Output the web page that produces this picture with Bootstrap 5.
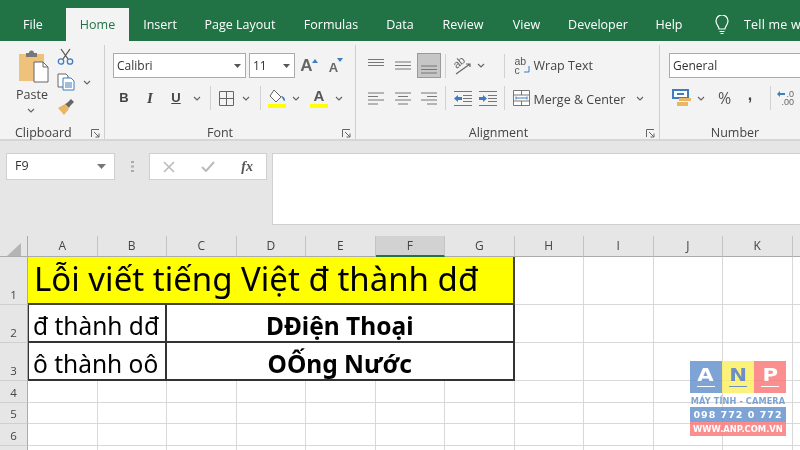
<!DOCTYPE html>
<html lang="vi">
<head>
<meta charset="utf-8">
<title>Excel</title>
<link href="https://cdn.jsdelivr.net/npm/bootstrap@5.3.0/dist/css/bootstrap.min.css" rel="stylesheet">
<style>
html,body{width:800px;height:450px;overflow:hidden;margin:0;background:#e6e6e6;font-family:"Open Sans","Noto Sans",sans-serif;color:#444}
.xl-app{width:800px;height:450px;overflow:hidden;position:relative;filter:blur(.3px)}
.xl-tabs{height:41px;background:#217346;padding-top:8px;white-space:nowrap}
.xl-tab{height:33px;line-height:33px;font-size:12.5px;color:#fff;text-align:center;flex:none}
.xl-tab.on{background:#f3f3f3;color:#217346}
.t66{width:66px}.t63{width:63px}.t62{width:62px}.t98{width:98px}.t84{width:84px}.t54{width:54px}.t72{width:72px}.t55{width:55px}.t88{width:88px}
.xl-tell{padding-left:18px;gap:14px;letter-spacing:.2px}
.xl-ribbon{height:100px;background:#f3f3f3;border-bottom:2px solid #d6d6d6;font-size:12.5px;color:#444}
.rg{height:94px;margin-top:4px;border-right:1px solid #cfcfcf;position:relative;flex:none}
.rg1{width:105px}.rg2{width:251px}.rg3{width:304px}.rg4{width:140px;border-right:0}
.rg-label{position:absolute;left:0;right:0;bottom:-3px;text-align:center;line-height:18px;font-size:12.5px}
.rg1 .rg-label{text-align:left;padding-left:15px}
.rg2 .rg-label{padding-right:20px}
.rg3 .rg-label{padding-right:18px}
.rg4 .rg-label{padding-left:10px}
.launch{position:absolute;right:4px;bottom:1px}
.paste{width:57px;padding-left:18px;padding-top:5px;flex:none}
.paste-t{line-height:16px;margin-top:4px;margin-left:-2px}
.paste-c{padding-left:9px;line-height:14px}
.cl2{padding-top:3px;gap:8px}
.frow{height:25px;align-items:center;flex:none}
.f1{padding-left:8px;margin-top:8px;gap:3px}
.f2{padding-left:6px;margin-top:7px;height:26px}
.a1{padding-left:6.500px;margin-top:8px}
.a2{padding-left:6.500px;margin-top:7px;height:26px}
.n1{padding-left:9px;margin-top:8px}
.n2{padding-left:12px;margin-top:7px;height:26px}
.selbox{height:25px;background:#fff;border:1px solid #ababab;display:flex;align-items:center;justify-content:space-between;padding:0 4px 0 3px;color:#333;font-size:12px;flex:none}
.s133{width:133px}.s46{width:46px}.s200{width:200px}
.cc{display:flex;align-items:center;justify-content:center;flex:none;height:25px}
.se{justify-content:flex-end}
.c5{width:4px}.c8{width:8px}.c10{width:10px}.c14{width:14px}.c16{width:16px}.c18{width:18px}.c22{width:22px}.c24{width:24px}.c26{width:26px}.c27{width:27px}.c32{width:32px}.c20{width:20px}
.bt{font-weight:700;color:#444;font-family:"Liberation Sans",sans-serif;font-size:13px}
.ital{font-style:italic;font-family:"Liberation Serif",serif;font-size:15px}
.under{text-decoration:underline}
.comma{font-size:16px;line-height:16px;margin-bottom:6px}
.pct{font-size:16px;color:#555}
.vsep{width:1px;height:24px;background:#d2d2d2;flex:none}
.pressed{background:#c6c6c6;border:1px solid #9a9a9a;height:25px;width:24px;display:flex;align-items:flex-end;justify-content:center;padding-bottom:3px;flex:none}
.txt{font-size:12.5px;color:#444;white-space:nowrap}
.tdown1{margin-top:2px}.tdown2{margin-top:4px}
.wrapb{margin-left:10px}.mergeb{margin-left:8px}
.m12{margin-left:11px}
.grow-a{font:700 17px/17px "Liberation Sans",sans-serif;color:#666}
.shrink-a{font:700 13px/13px "Liberation Sans",sans-serif;color:#666;margin-top:4px}
.caret-up{margin:0 0 10px -1px}.caret-dn{margin:0 0 11px -1px}
.col-a{display:flex;flex-direction:column;align-items:center;width:18px;font:700 15px/14px "Liberation Sans",sans-serif;color:#555}
.col-bar{width:18px;height:4px;background:#ff0;margin-top:1px}
.wrap-ic{display:grid;grid-template-columns:1fr 7px;width:15px;font:10.500px/9px "Liberation Sans",sans-serif;color:#555}
.wrap-ab{grid-column:span 2}
.dec-ic{display:flex;flex-direction:column;width:16px;font:9px/8px "Liberation Sans",sans-serif;color:#666;align-items:flex-end}
.dec-top{display:flex;align-items:center;gap:1px}
.orient{display:grid;place-items:center}
.orient>*{grid-area:1/1}
.orient-t{font:11px/11px "Liberation Sans",sans-serif;color:#666;transform:translate(-2px,-3px) rotate(-40deg)}
.xl-fbar{height:95px;padding:12px 0 0 6px;background:#e6e6e6}
.namebox{width:109px;height:27px;background:#fff;border:1px solid #d0d0d0;display:flex;align-items:center;justify-content:space-between;padding:0 8px;font-size:12.5px;color:#333}
.dots{width:34px;height:27px;display:flex;align-items:center;justify-content:center}
.fxbox{width:118px;height:27px;background:#fff;border:1px solid #d0d0d0;display:flex;align-items:center;justify-content:space-between;padding:0 13px;flex:none}
.fxinput{height:72px;flex:1;background:#fff;border:1px solid #d0d0d0;border-right:0;margin-left:5px}
.fxt{font-family:"Liberation Serif",serif;font-style:italic;font-weight:700;font-size:14px;color:#555}
.sheet{display:grid;grid-template-columns:28px repeat(12,69.5px);grid-template-rows:21px 48px 38px 38px 22px 21px 22px 22px;background:#fff;font-family:"Noto Sans","Open Sans",sans-serif}
.hc{background:#e6e6e6;border-right:1px solid #c4c4c4;border-bottom:1px solid #ababab;text-align:center;font-size:12px;line-height:20px;color:#444;font-family:"Open Sans",sans-serif}
.hc.sel{background:#d2d2d2;border-bottom:2px solid #217346}
.corner{border-right:1px solid #ababab}
.rh{background:#e6e6e6;border-right:1px solid #ababab;border-bottom:1px solid #cfcfcf;text-align:center;font-size:11.5px;color:#444;font-family:"Open Sans",sans-serif;display:flex;align-items:flex-end;justify-content:center;padding-bottom:1px}
.gc{border-right:1px solid #d8d8d8;border-bottom:1px solid #d8d8d8}
.title-c{grid-column:span 7;background:#ff0;border-right:2px solid #444;border-bottom:2px solid #444;color:#000;font-size:33px;line-height:44px;padding-left:6px;white-space:nowrap}
.ab{grid-column:span 2;border-left:1px solid #333;border-right:2px solid #333;border-bottom:2px solid #333;color:#000;font-size:24.500px;line-height:36px;white-space:nowrap;padding:0 0 0 4px;overflow:hidden}
.cg{grid-column:span 5;border-right:2px solid #333;border-bottom:2px solid #333;color:#000;font-size:24.500px;font-weight:700;line-height:36px;text-align:center;white-space:nowrap;overflow:hidden}
.cell-tx{display:block;margin-top:3px}
.wm{position:absolute;left:690px;top:361px;width:96px;height:75px;opacity:.8;font-family:"DejaVu Sans",sans-serif;font-weight:700}
.wm-top{height:32px}
.wm-b{width:32px;height:32px;color:#fff;font-size:17px;line-height:28px;text-align:center;position:relative}
.wm-b span{display:inline-block;transform:scaleX(1.25)}
.wm-b::after{content:"";position:absolute;left:7px;right:7px;bottom:6px;height:1px;background:#fff}
.wm-blue{background:#5f8ecb}.wm-yel{background:#fbef5b;color:#4a74b8}.wm-red{background:#fb7474}
.wm-yel::after{background:#4a74b8}
.wm-cap{height:14px;padding-top:3px;line-height:11px;font-size:8.200px;color:#5f8ecb;text-align:center;white-space:nowrap;letter-spacing:.1px}
.wm-ph{height:15px;line-height:15px;background:#5f8ecb;color:#fff;font-size:9.500px;text-align:center;letter-spacing:1px;white-space:nowrap}
.wm-web{height:14px;line-height:14px;background:#fb7474;color:#fff;font-size:8.400px;text-align:center;white-space:nowrap}
</style>
</head>
<body>
<div class="xl-app">
  <div class="xl-tabs d-flex">
    <div class="xl-tab t66">File</div>
    <div class="xl-tab t63 on">Home</div>
    <div class="xl-tab t62">Insert</div>
    <div class="xl-tab t98">Page Layout</div>
    <div class="xl-tab t84">Formulas</div>
    <div class="xl-tab t54">Data</div>
    <div class="xl-tab t72">Review</div>
    <div class="xl-tab t55">View</div>
    <div class="xl-tab t88">Developer</div>
    <div class="xl-tab t54">Help</div>
    <div class="xl-tab xl-tell d-flex align-items-center">
      <svg width="16" height="20" viewBox="0 0 16 20" fill="none" stroke="#fff" stroke-width="1.2"><path d="M5 14c0-3-3-4-3-8a6 6 0 0 1 12 0c0 4-3 5-3 8z"/><path d="M5.500 16.500h5M6.500 18.500h3"/></svg>
      <span>Tell me wh</span>
    </div>
  </div>

  <div class="xl-ribbon d-flex">
    <div class="rg rg1 d-flex">
      <div class="paste">
        <svg width="31" height="33" viewBox="0 0 31 33"><path fill="#eec27a" d="M1 4h25v27H1z"/><path fill="#777" d="M8 3h3a2.500 2.500 0 0 1 5 0h3v4H8z"/><path fill="#fff" stroke="#666" d="M16 12h9l5 5v15H16z"/><path fill="none" stroke="#666" d="M25 12v5h5"/></svg>
        <div class="paste-t">Paste</div>
        <div class="paste-c"><svg width="8" height="5" viewBox="0 0 8 5" fill="none" stroke="#666" stroke-width="1.2"><path d="M1 1l3 3 3-3"/></svg></div>
      </div>
      <div class="cl2 d-flex flex-column">
        <svg width="17" height="17" viewBox="0 0 17 17" fill="none" stroke-width="1.3"><path stroke="#555" d="M4 1l7 10M13 1L6 11"/><circle cx="4" cy="13.500" r="2.700" stroke="#3f7dbe"/><circle cx="13" cy="13.500" r="2.700" stroke="#3f7dbe"/></svg>
        <div class="d-flex align-items-center gap-2">
          <svg width="18" height="18" viewBox="0 0 18 18" fill="#fff" stroke="#666"><path d="M1 1h8l2 2v11H1z"/><path stroke="#3f7dbe" d="M6 5h8l3 3v9H6z"/><path stroke="#3f7dbe" d="M8 10h7M8 12h7M8 14h7"/></svg>
          <svg width="8" height="5" viewBox="0 0 8 5" fill="none" stroke="#666" stroke-width="1.2"><path d="M1 1l3 3 3-3"/></svg>
        </div>
        <svg width="18" height="16" viewBox="0 0 18 16"><path fill="#e9b664" d="M1 9l7-4 4 5-5 6z"/><path fill="#666" d="M10 4l4-4 3 3-4 4-1 2-4-4z"/></svg>
      </div>
      <div class="rg-label">Clipboard</div>
      <svg class="launch" width="9" height="9" viewBox="0 0 9 9" fill="none" stroke="#666"><path d="M.5 8V.5H8M3 3l5 5M8 4.500V8H4.500"/></svg>
    </div>

    <div class="rg rg2">
      <div class="frow f1 d-flex">
        <div class="selbox s133"><span>Calibri</span><svg width="7" height="4" viewBox="0 0 7 4"><path fill="#555" d="M0 0h7L3.500 4z"/></svg></div>
        <div class="selbox s46"><span>11</span><svg width="7" height="4" viewBox="0 0 7 4"><path fill="#555" d="M0 0h7L3.500 4z"/></svg></div>
        <div class="cc c22"><span class="grow-a">A</span><svg class="caret-up" width="6" height="4" viewBox="0 0 6 4"><path fill="#3f7dbe" d="M0 4l3-4 3 4z"/></svg></div>
        <div class="cc c26"><span class="shrink-a">A</span><svg class="caret-dn" width="6" height="4" viewBox="0 0 6 4"><path fill="#3f7dbe" d="M0 0h6L3 4z"/></svg></div>
      </div>
      <div class="frow f2 d-flex">
        <div class="cc c26 bt">B</div>
        <div class="cc c26 bt ital">I</div>
        <div class="cc c26 bt under">U</div>
        <div class="cc c16"><svg width="8" height="5" viewBox="0 0 8 5" fill="none" stroke="#666" stroke-width="1.2"><path d="M1 1l3 3 3-3"/></svg></div>
        <div class="cc c10"><div class="vsep"></div></div>
        <div class="cc c22"><svg width="15" height="15" viewBox="0 0 15 15" fill="none" stroke="#666"><path d="M.5.500h14v14H.5zM7.500.500v14M.5 7.500h14"/></svg></div>
        <div class="cc c18"><svg width="8" height="5" viewBox="0 0 8 5" fill="none" stroke="#666" stroke-width="1.2"><path d="M1 1l3 3 3-3"/></svg></div>
        <div class="cc c10"><div class="vsep"></div></div>
        <div class="cc c24"><svg width="18" height="19" viewBox="0 0 18 19"><path fill="#fff" stroke="#666" d="M6 1l7 7-5 5-6-6z"/><path fill="#3f7dbe" d="M13 7c2 0 4 2 4 4 0 1-1 1-1 1z"/><path fill="#ff0" d="M0 15h18v4H0z"/></svg></div>
        <div class="cc c14"><svg width="8" height="5" viewBox="0 0 8 5" fill="none" stroke="#666" stroke-width="1.2"><path d="M1 1l3 3 3-3"/></svg></div>
        <div class="cc c32"><div class="col-a"><span>A</span><div class="col-bar"></div></div></div>
        <div class="cc c8"><svg width="8" height="5" viewBox="0 0 8 5" fill="none" stroke="#666" stroke-width="1.2"><path d="M1 1l3 3 3-3"/></svg></div>
      </div>
      <div class="rg-label">Font</div>
      <svg class="launch" width="9" height="9" viewBox="0 0 9 9" fill="none" stroke="#666"><path d="M.5 8V.5H8M3 3l5 5M8 4.500V8H4.500"/></svg>
    </div>

    <div class="rg rg3">
      <div class="frow a1 d-flex">
        <div class="cc c27"><svg width="16" height="16" viewBox="0 0 16 16" fill="none" stroke="#777"><path d="M0 1.500h16M0 4.500h16M0 7.500h16"/></svg></div>
        <div class="cc c27"><svg width="16" height="9" viewBox="0 0 16 9" fill="none" stroke="#777"><path d="M0 1h16M0 4.500h16M0 8h16"/></svg></div>
        <div class="pressed"><svg width="16" height="9" viewBox="0 0 16 9" fill="none" stroke="#777"><path d="M0 1h16M0 4.500h16M0 8h16"/></svg></div>
        <div class="cc c10"><div class="vsep"></div></div>
        <div class="cc c22 orient"><svg width="20" height="20" viewBox="0 0 20 20" fill="none" stroke="#666" stroke-width="1.200"><path d="M4 18L18 8M14 8h4v3"/></svg><span class="orient-t">ab</span></div>
        <div class="cc c16"><svg width="8" height="5" viewBox="0 0 8 5" fill="none" stroke="#666" stroke-width="1.2"><path d="M1 1l3 3 3-3"/></svg></div>
        <div class="cc c16 se"><div class="vsep"></div></div>
        <div class="d-flex align-items-center gap-1 wrapb">
          <div class="wrap-ic"><span class="wrap-ab">ab</span><span>c</span><svg width="7" height="8" viewBox="0 0 7 8" fill="none" stroke="#3f7dbe"><path d="M6 0v6H1"/></svg></div>
          <span class="txt tdown1">Wrap Text</span>
        </div>
      </div>
      <div class="frow a2 d-flex">
        <div class="cc c27"><svg width="16" height="13" viewBox="0 0 16 13" fill="none" stroke="#777"><path d="M0 1h16M0 4.500h10M0 8h16M0 12h10"/></svg></div>
        <div class="cc c27"><svg width="16" height="13" viewBox="0 0 16 13" fill="none" stroke="#777"><path d="M0 1h16M3 4.500h10M0 8h16M3 12h10"/></svg></div>
        <div class="cc c24"><svg width="16" height="13" viewBox="0 0 16 13" fill="none" stroke="#777"><path d="M0 1h16M6 4.500h10M0 8h16M6 12h10"/></svg></div>
        <div class="cc c10"><div class="vsep"></div></div>
        <div class="cc c24"><svg width="18" height="15" viewBox="0 0 18 15"><path fill="none" stroke="#777" d="M0 .5h18M9 4.500h9M9 7.500h9M9 10.500h9M0 14.500h18"/><path fill="#3f7dbe" d="M0 7.500l4-3.500v2h4v3H4v2z"/></svg></div>
        <div class="cc c26"><svg width="18" height="15" viewBox="0 0 18 15"><path fill="none" stroke="#777" d="M0 .5h18M9 4.500h9M9 7.500h9M9 10.500h9M0 14.500h18"/><path fill="#3f7dbe" d="M8 7.500L4 4v2H0v3h4v2z"/></svg></div>
        <div class="cc c5 se"><div class="vsep"></div></div>
        <div class="d-flex align-items-center gap-1 mergeb">
          <svg width="17" height="16" viewBox="0 0 17 16" fill="#fff" stroke="#777"><path d="M.5.500h16v15H.5zM.5 5h16M.5 11h16M8.500.500V5M8.500 11v4.500"/><path stroke="#3f7dbe" d="M3 8h11M3 6.500v3M14 6.500v3"/></svg>
          <span class="txt tdown2">Merge &amp; Center</span>
        </div>
        <div class="cc m12"><svg width="8" height="5" viewBox="0 0 8 5" fill="none" stroke="#666" stroke-width="1.2"><path d="M1 1l3 3 3-3"/></svg></div>
      </div>
      <div class="rg-label">Alignment</div>
      <svg class="launch" width="9" height="9" viewBox="0 0 9 9" fill="none" stroke="#666"><path d="M.5 8V.5H8M3 3l5 5M8 4.500V8H4.500"/></svg>
    </div>

    <div class="rg rg4">
      <div class="frow n1 d-flex">
        <div class="selbox s200"><span>General</span></div>
      </div>
      <div class="frow n2 d-flex">
        <svg width="19" height="18" viewBox="0 0 19 18"><path fill="#3f7dbe" d="M0 0h17v10H0z"/><path fill="#fff" d="M2 2h13v6H2z"/><path fill="#3f7dbe" d="M5 4h7v2H5z"/><path fill="#e9b664" d="M7 9h12v3H7zM5 13h11v4H5z"/></svg>
        <div class="cc c20"><svg width="8" height="5" viewBox="0 0 8 5" fill="none" stroke="#666" stroke-width="1.2"><path d="M1 1l3 3 3-3"/></svg></div>
        <div class="cc c27 pct">%</div>
        <div class="cc c24 bt"><span class="comma">,</span></div>
        <div class="cc c16"><div class="vsep"></div></div>
        <div class="dec-ic"><div class="dec-top"><svg width="8" height="6" viewBox="0 0 8 6"><path fill="#3f7dbe" d="M0 3l3-3v2h5v2H3v2z"/></svg><span>.0</span></div><span>.00</span></div>
      </div>
      <div class="rg-label">Number</div>
    </div>
  </div>

  <div class="xl-fbar d-flex align-items-start">
    <div class="namebox"><span>F9</span><svg width="9" height="5" viewBox="0 0 9 5"><path fill="#777" d="M0 0h9L4.500 5z"/></svg></div>
    <div class="dots"><svg width="3" height="11" viewBox="0 0 3 11"><path fill="#aaa" d="M0 0h3v2H0zM0 4.500h3v2H0zM0 9h3v2H0z"/></svg></div>
    <div class="fxbox">
      <svg width="12" height="12" viewBox="0 0 12 12" fill="none" stroke="#bbb" stroke-width="1.6"><path d="M1 1l10 10M11 1L1 11"/></svg>
      <svg width="14" height="11" viewBox="0 0 14 11" fill="none" stroke="#bbb" stroke-width="2"><path d="M1 6l4 4 8-9"/></svg>
      <span class="fxt">fx</span>
    </div>
    <div class="fxinput"></div>
  </div>

  <div class="sheet">
    <div class="hc corner"><svg width="14" height="14" viewBox="0 0 14 14" class="mt-1"><path fill="#b5b5b5" d="M14 1v13H0z"/></svg></div>
    <div class="hc">A</div><div class="hc">B</div><div class="hc">C</div><div class="hc">D</div><div class="hc">E</div><div class="hc sel">F</div><div class="hc">G</div><div class="hc">H</div><div class="hc">I</div><div class="hc">J</div><div class="hc">K</div><div class="hc"></div>

    <div class="rh">1</div><div class="title-c">Lỗi viết tiếng Việt đ thành dđ</div><div class="gc"></div><div class="gc"></div><div class="gc"></div><div class="gc"></div><div class="gc"></div>
    <div class="rh">2</div><div class="ab"><span class="cell-tx">đ thành dđ</span></div><div class="cg"><span class="cell-tx">DĐiện Thoại</span></div><div class="gc"></div><div class="gc"></div><div class="gc"></div><div class="gc"></div><div class="gc"></div>
    <div class="rh">3</div><div class="ab"><span class="cell-tx">ô thành oô</span></div><div class="cg"><span class="cell-tx">OỐng Nước</span></div><div class="gc"></div><div class="gc"></div><div class="gc"></div><div class="gc"></div><div class="gc"></div>
    <div class="rh">4</div><div class="gc"></div><div class="gc"></div><div class="gc"></div><div class="gc"></div><div class="gc"></div><div class="gc"></div><div class="gc"></div><div class="gc"></div><div class="gc"></div><div class="gc"></div><div class="gc"></div><div class="gc"></div>
    <div class="rh">5</div><div class="gc"></div><div class="gc"></div><div class="gc"></div><div class="gc"></div><div class="gc"></div><div class="gc"></div><div class="gc"></div><div class="gc"></div><div class="gc"></div><div class="gc"></div><div class="gc"></div><div class="gc"></div>
    <div class="rh">6</div><div class="gc"></div><div class="gc"></div><div class="gc"></div><div class="gc"></div><div class="gc"></div><div class="gc"></div><div class="gc"></div><div class="gc"></div><div class="gc"></div><div class="gc"></div><div class="gc"></div><div class="gc"></div>
    <div class="rh"></div><div class="gc"></div><div class="gc"></div><div class="gc"></div><div class="gc"></div><div class="gc"></div><div class="gc"></div><div class="gc"></div><div class="gc"></div><div class="gc"></div><div class="gc"></div><div class="gc"></div><div class="gc"></div>
  </div>

  <div class="wm">
    <div class="wm-top d-flex"><div class="wm-b wm-blue"><span>A</span></div><div class="wm-b wm-yel"><span>N</span></div><div class="wm-b wm-red"><span>P</span></div></div>
    <div class="wm-cap">MÁY TÍNH - CAMERA</div>
    <div class="wm-ph">098 772 0 772</div>
    <div class="wm-web">WWW.ANP.COM.VN</div>
  </div>
</div>
</body>
</html>
